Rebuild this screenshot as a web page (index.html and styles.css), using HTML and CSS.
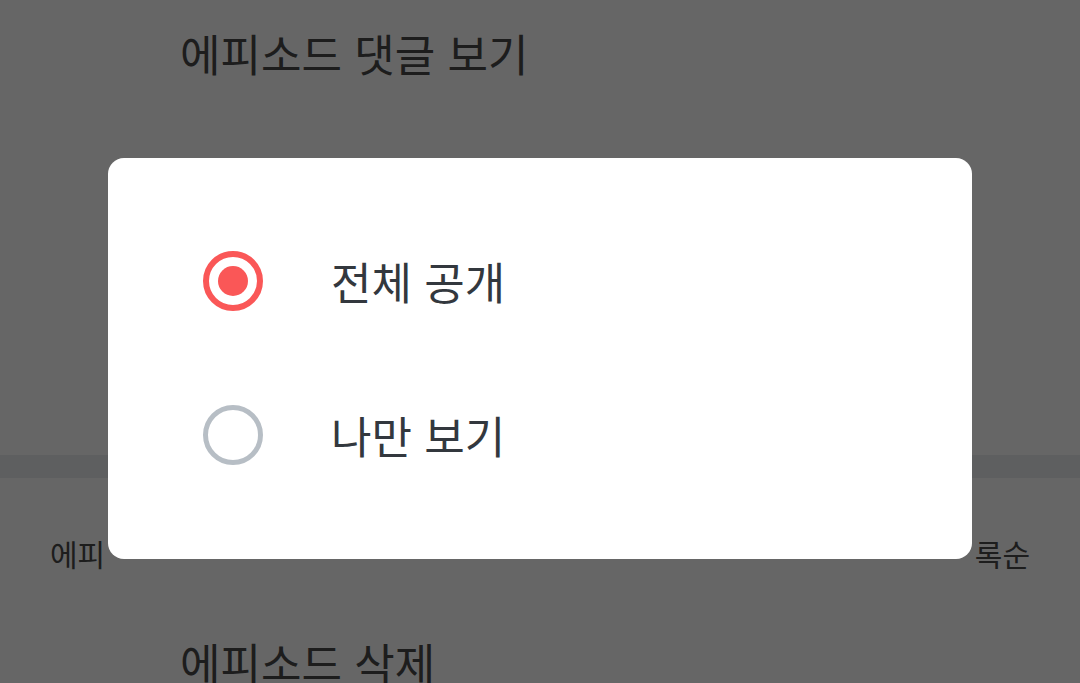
FILE: index.html
```html
<!DOCTYPE html>
<html lang="ko">
<head>
<meta charset="utf-8">
<link rel="stylesheet" href="styles.css">
</head>
<body>
<div class="page">
  <div class="row-title">에피소드 댓글 보기</div>
  <div class="spacer"></div>
  <div class="divider"></div>
  <div class="row-sort">
    <span class="sort-label">에피</span>
    <span class="sort-value">록순</span>
  </div>
  <div class="row-title row-delete">에피소드 삭제</div>
</div>
<div class="overlay">
  <div class="dialog">
    <div class="option">
      <span class="radio radio-on"><span class="dot"></span></span>
      <span class="option-label">전체 공개</span>
    </div>
    <div class="option">
      <span class="radio radio-off"></span>
      <span class="option-label">나만 보기</span>
    </div>
  </div>
</div>
</body>
</html>
```
FILE: styles.css
```css
* { box-sizing: border-box; }
html, body { margin: 0; padding: 0; }
body {
  width: 1080px;
  height: 683px;
  overflow: hidden;
  background: #ffffff;
  font-family: "Noto Sans CJK KR", "Noto Sans", sans-serif;
  color: #3a3a3a;
}
.page {
  display: flex;
  flex-direction: column;
}
.row-title {
  padding-left: 180px;
  font-size: 44px;
  line-height: 1;
  height: 106px;
  display: flex;
  align-items: center;
  color: #4a4a4a;
}
.spacer { height: 349px; }
.divider { height: 23px; background: #ecedef; }
.row-sort {
  height: 150px;
  display: flex;
  align-items: center;
  justify-content: space-between;
  padding: 0 50px;
  font-size: 30px;
  color: #4a4a4a;
}
.row-delete {
  padding-top: 12px;
  align-items: flex-start;
}
.overlay {
  position: fixed;
  inset: 0;
  background: rgba(0, 0, 0, 0.6);
  display: flex;
  justify-content: center;
  align-items: flex-start;
  padding-top: 158px;
}
.dialog {
  width: 864px;
  height: 401px;
  background: #ffffff;
  border-radius: 16px;
  padding: 46px 0 47px 95px;
  display: flex;
  flex-direction: column;
}
.option {
  height: 154px;
  display: flex;
  align-items: center;
  gap: 68px;
}
.radio {
  width: 60px;
  height: 60px;
  border-radius: 50%;
  display: flex;
  align-items: center;
  justify-content: center;
  flex: none;
}
.radio-on { border: 6px solid #fa5757; }
.radio-on .dot {
  width: 30px;
  height: 30px;
  border-radius: 50%;
  background: #fa5757;
}
.radio-off { border: 5px solid #b7bec5; }
.option-label {
  font-size: 44px;
  color: #33383e;
  line-height: 1;
}
```
